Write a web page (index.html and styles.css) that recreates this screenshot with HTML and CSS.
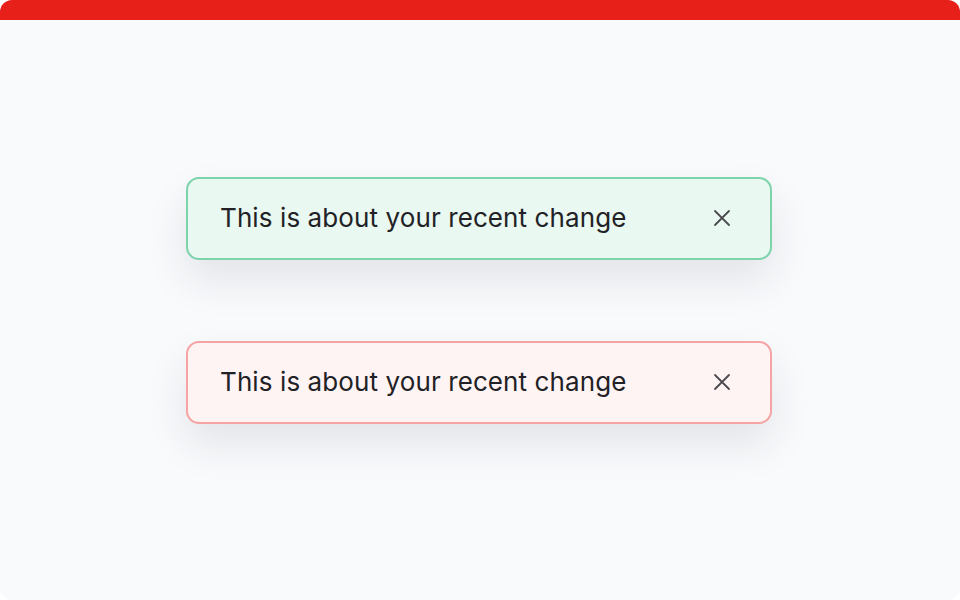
FILE: index.html
```html
<!DOCTYPE html>
<html>
<head>
<meta charset="utf-8">
<link rel="stylesheet" href="styles.css">
</head>
<body>
<div class="page">
  <div class="topbar"></div>
  <main class="stage">
    <div class="toast toast-success">
      <span class="toast-text">This is about your recent change</span>
      <button class="toast-close" aria-label="Close">
        <svg width="18" height="18" viewBox="0 0 18 18"><path d="M2 2L16 16M16 2L2 16" stroke="#4a4a4f" stroke-width="1.8" stroke-linecap="round" fill="none"/></svg>
      </button>
    </div>
    <div class="toast toast-error">
      <span class="toast-text">This is about your recent change</span>
      <button class="toast-close" aria-label="Close">
        <svg width="18" height="18" viewBox="0 0 18 18"><path d="M2 2L16 16M16 2L2 16" stroke="#4a4a4f" stroke-width="1.8" stroke-linecap="round" fill="none"/></svg>
      </button>
    </div>
  </main>
</div>
</body>
</html>
```

FILE: styles.css
```css
html, body {
  margin: 0;
  padding: 0;
  background: #ffffff;
}
.page {
  width: 960px;
  height: 600px;
  border-radius: 12px;
  overflow: hidden;
  background: #f9fafc;
  display: flex;
  flex-direction: column;
  font-family: Inter, "Noto Sans", sans-serif;
}
.topbar {
  height: 20px;
  background: #e8201a;
  flex: none;
}
.stage {
  flex: 1;
  display: flex;
  flex-direction: column;
  align-items: center;
  justify-content: center;
  gap: 81px;
  padding-bottom: 20px;
}
.toast {
  box-sizing: border-box;
  width: 586px;
  height: 83px;
  margin-right: 2px;
  border-radius: 13px;
  border: 2px solid;
  display: flex;
  align-items: center;
  justify-content: space-between;
  padding: 0 38px 0 32px;
  box-shadow: 0 20px 40px rgba(30, 40, 60, 0.1);
}
.toast-success {
  background: #e9f8f0;
  border-color: #7dd3ac;
}
.toast-error {
  background: #fff4f4;
  border-color: #f5a3a3;
}
.toast-text {
  font-size: 26px;
  font-weight: 400;
  color: #222226;
  letter-spacing: 0.1px;
  line-height: 1;
}
.toast-close {
  border: 0;
  background: none;
  padding: 0;
  width: 20px;
  height: 20px;
  display: flex;
  align-items: center;
  justify-content: center;
}
```
